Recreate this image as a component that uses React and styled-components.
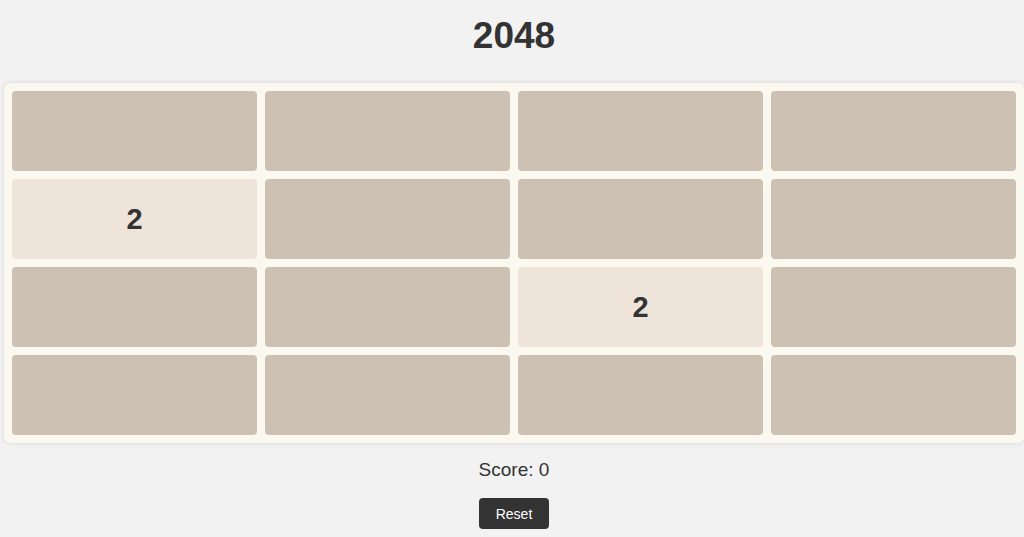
import { useState } from "react";
import styled, { createGlobalStyle } from "styled-components";

const GlobalStyle = createGlobalStyle`
  body {
    margin: 0;
    background: #f2f2f2;
    font-family: "Liberation Sans", Arial, sans-serif;
    color: #333;
  }
`;

const Page = styled.div`
  display: flex;
  flex-direction: column;
  align-items: center;
  padding: 0 0 0 4px;
`;

const Title = styled.h1`
  font-size: 37px;
  font-weight: bold;
  margin: 14px 0 25px;
  line-height: 44px;
`;

const Board = styled.div`
  box-sizing: border-box;
  width: 100%;
  background: #faf8ef;
  border-radius: 6px;
  padding: 8px;
  box-shadow: 0 0 5px rgba(0, 0, 0, 0.12);
  display: grid;
  grid-template-columns: repeat(4, 1fr);
  grid-auto-rows: 80px;
  gap: 8px;
`;

const Tile = styled.div`
  border-radius: 4px;
  background: ${(p) => (p.value ? "#eee4da" : "#cdc1b4")};
  display: flex;
  align-items: center;
  justify-content: center;
  font-size: 29px;
  font-weight: bold;
  color: #333;
`;

const Score = styled.div`
  font-size: 19px;
  margin-top: 16px;
  line-height: 22px;
`;

const Button = styled.button`
  margin-top: 17px;
  width: 70px;
  height: 31px;
  background: #333;
  color: #fff;
  border: none;
  border-radius: 4px;
  font-family: "Liberation Sans", Arial, sans-serif;
  font-size: 14px;
  cursor: pointer;
`;

const start = [0, 0, 0, 0, 2, 0, 0, 0, 0, 0, 2, 0, 0, 0, 0, 0];

const App = () => {
  const [cells, setCells] = useState(start);
  const [score, setScore] = useState(0);

  function reset() {
    setCells(start);
    setScore(0);
  }

  return (
    <>
      <GlobalStyle />
      <Page>
        <Title>2048</Title>
        <Board>
          {cells.map((v, i) => (
            <Tile key={i} value={v}>
              {v ? v : ""}
            </Tile>
          ))}
        </Board>
        <Score>Score: {score}</Score>
        <Button onClick={reset}>Reset</Button>
      </Page>
    </>
  );
};

export default App;
